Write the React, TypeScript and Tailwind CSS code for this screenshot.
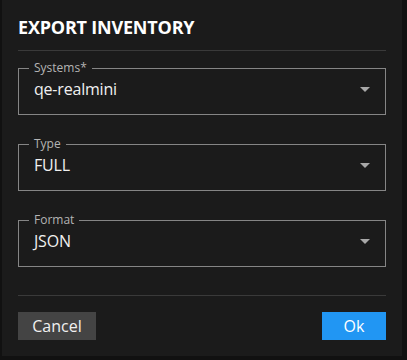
import React from "react";

function Arrow() {
  return (
    <svg width="24" height="24" viewBox="0 0 24 24" className="shrink-0">
      <path d="M7 10l5 5 5-5z" fill="#a8a8a8" />
    </svg>
  );
}

function Field({ label, value }: { label: string; value: string }) {
  return (
    <fieldset className="border border-[#858585] px-[15px] pb-[8px] pt-0 h-[54px] m-0 min-w-0">
      <legend className="ml-[-5px] px-[5px] text-[12px] leading-[14px] text-[#b4b4b4]">{label}</legend>
      <div className="flex items-center justify-between h-[30px] mr-[-7px] mt-[-1px]">
        <span className="text-[16px] leading-[20px] text-[#f0f0f0] tracking-[-0.2px]">{value}</span>
        <Arrow />
      </div>
    </fieldset>
  );
}

export default function App() {
  return (
    <div className="w-[407px] h-[360px] bg-[#111111] pl-[2px]" style={{ fontFamily: '"Open Sans", "Noto Sans", sans-serif' }}>
      <div className="w-[400px] h-[356px] bg-[#1b1b1b] px-[16px] flex flex-col">
        <div className="pt-[16px] pb-[12px] border-b border-[#3a3a3a]">
          <h1 className="text-[18px] leading-[22px] font-bold text-white tracking-[-0.2px]">EXPORT INVENTORY</h1>
        </div>
        <div className="flex flex-col gap-[22px] pt-[10px] pb-[28px] border-b border-[#3a3a3a]">
          <Field label="Systems*" value="qe-realmini" />
          <Field label="Type" value="FULL" />
          <Field label="Format" value="JSON" />
        </div>
        <div className="flex justify-between pt-[16px]">
          <button className="h-[28px] w-[78px] bg-[#444444] text-[16px] text-[#f0f0f0]">Cancel</button>
          <button className="h-[28px] w-[64px] bg-[#2196f3] text-[16px] text-white">Ok</button>
        </div>
      </div>
    </div>
  );
}
